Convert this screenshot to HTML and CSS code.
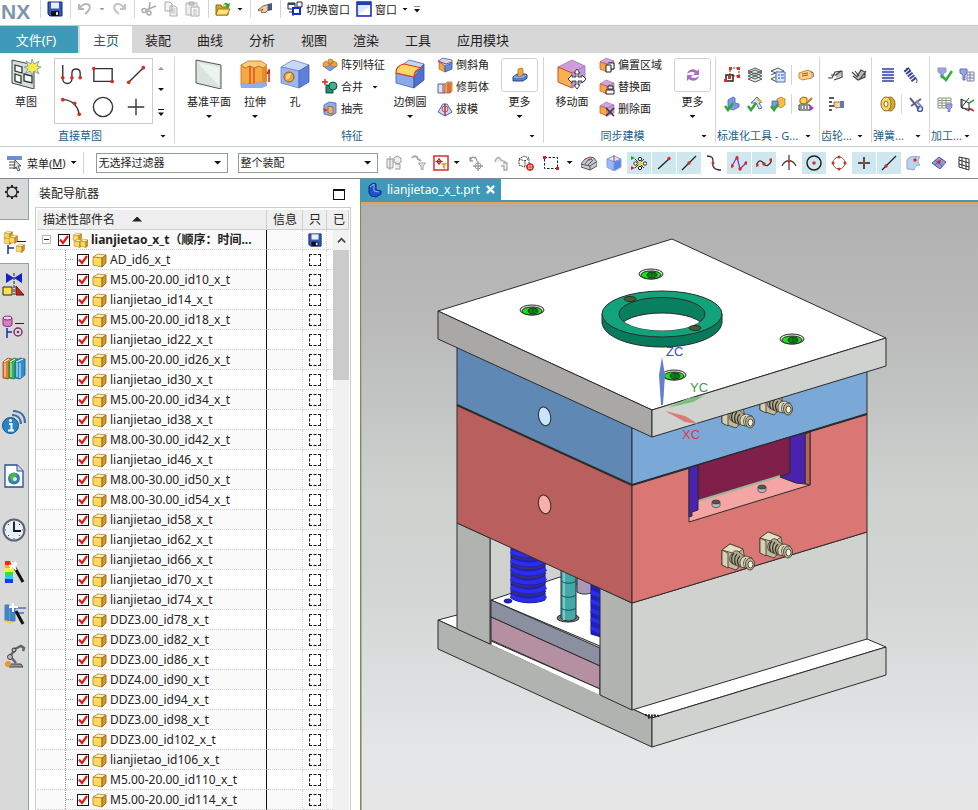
FILE: index.html
```html
<!DOCTYPE html>
<html lang="zh-CN">
<head>
    <meta charset="utf-8">
    <title>NX - lianjietao_x_t.prt</title>
    <link rel="stylesheet" href="styles.css">
</head>
<body>
    <!-- icon sprite -->
    <svg class="sprite" aria-hidden="true">
        <symbol id="i-save" viewBox="0 0 16 16"><path d="M1 1h14v14H3l-2-2z" fill="#3558b8" stroke="#14286e"/><path d="M4 1.500h8v6H4z" fill="#e8eefc"/><path d="M4 10h8v5H4z" fill="#111"/><path d="M9 11h2v3H9z" fill="#dde"/></symbol>
        <symbol id="i-undo" viewBox="0 0 16 16"><path d="M2 3v5h5M2.500 7.500C5 3 10 2 12 4s1 5-4 9" fill="none" stroke="#b4b8be" stroke-width="2"/></symbol>
        <symbol id="i-redo" viewBox="0 0 16 16"><path d="M14 3v5H9M13.500 7.500C11 3 6 2 4 4s-1 5 4 9" fill="none" stroke="#c0c4ca" stroke-width="2"/></symbol>
        <symbol id="i-cut" viewBox="0 0 16 16"><path d="M9 1L8 9M15 5L5 9" stroke="#aaa" stroke-width="1.500"/><circle cx="8" cy="12" r="2" fill="none" stroke="#aaa" stroke-width="1.500"/><circle cx="3" cy="9.500" r="2" fill="none" stroke="#aaa" stroke-width="1.500"/></symbol>
        <symbol id="i-copy" viewBox="0 0 16 16"><path d="M2 1h5l2 2v7H2z M7 5h5l2 2v8H7z" fill="#f4f4f4" stroke="#aaa"/><path d="M8.500 8h4M8.500 10h4M8.500 12h4" stroke="#bbb"/></symbol>
        <symbol id="i-paste" viewBox="0 0 16 16"><path d="M1 2h11v12H1z" fill="#eee" stroke="#b5b5b5"/><path d="M4 1h5v3H4z" fill="#ccc" stroke="#aaa"/><path d="M6 6h8v9H6z" fill="#f6f6f6" stroke="#aaa"/><path d="M8 9h4M8 11h4M8 13h4" stroke="#bbb"/></symbol>
        <symbol id="i-open" viewBox="0 0 16 16"><path d="M1 4h5l1 2h6v8H1z" fill="#d9a520" stroke="#8a6a10"/><path d="M3 8h12l-3 6H1z" fill="#ffe27a" stroke="#9a7a18"/><path d="M8 5c1-4 4-4 5-2l2-1-1 5-4-2 1-1c-1-1-2 0-3 1z" fill="#2fa52f"/></symbol>
        <symbol id="i-hand" viewBox="0 0 16 16"><path d="M11 3l4-1v7l-4 1z" fill="#3a5a9a"/><path d="M11 3.500L6 5 1 9l1 1 4-2-2 3 1 1 2-1 1 1 3-3z" fill="#f3cfa0" stroke="#6a4a20" stroke-width=".8"/></symbol>
        <symbol id="i-switch" viewBox="0 0 16 16"><path d="M1 2h7v6H1zM10 1h5v5h-5zM2 11h4v4" fill="none" stroke="#223"/><path d="M1 2h7v2H1z" fill="#345"/><path d="M6 7h7v6H6z" fill="#fff" stroke="#1230d8" stroke-width="2"/></symbol>
        <symbol id="i-window" viewBox="0 0 16 16"><path d="M1 1h14v14H1z" fill="#dbe7fa" stroke="#1226b8" stroke-width="1.500"/><path d="M1 1h14v3H1z" fill="#1a3fc0"/><path d="M2 14L14 5v9z" fill="#fff"/></symbol>

        <symbol id="b-sketch" viewBox="0 0 30 30"><path d="M1 1l22 5v24L1 24z" fill="#d3e0dc" stroke="#444"/><path d="M4 6l7 2v6l-7-2zM13 15l8 2v7l-8-2zM4 15l6 2v7l-6-2z" fill="#f3faf7" stroke="#333" stroke-width="1.300"/><path d="M21 0l2 5 5-3-2 5 4 1-4 2 2 5-5-3-2 4-2-4-5 3 3-5-4-2 4-1-2-5 5 3z" fill="#ffe84a" stroke="#5a9ab8" stroke-width=".8"/></symbol>
        <symbol id="b-plane" viewBox="0 0 30 30"><path d="M2 1l25 5v24L2 24z" fill="#d9e5df" stroke="#555"/><path d="M4 4l21 4v19z" fill="#edf4f0"/></symbol>
        <symbol id="b-extrude" viewBox="0 0 30 30"><path d="M1 6l4 3 5-2 4 2 5-2 4 2v15c-4-2-7 0-9 2-4-3-9-1-13 1z" fill="#f7a940" stroke="#b5702a" stroke-width=".8"/><path d="M1 6l7-4h13l6 4-4 3-4-2-5 2-4-2-5 2z" fill="#ffcb74" stroke="#b5702a" stroke-width=".8"/><path d="M23 9l4-3v17l-4 3z" fill="#e08a28"/><path d="M10 7v19M14 9v18" stroke="#d0401c" stroke-width="1.200"/><path d="M1 25c4-3 7 0 10 0s8-3 16-1v3l-5 2H1z" fill="#8fadea"/><path d="M29 23V12M27 15l2-4 2 4" stroke="#d02020" stroke-width="1.500" fill="none"/></symbol>
        <symbol id="b-hole" viewBox="0 0 30 30"><path d="M1 8L13 1l16 5-10 6z" fill="#c6d7f8" stroke="#6a82c0" stroke-width=".8"/><path d="M1 8l18 4v17L1 24z" fill="#9bb6f2" stroke="#6a82c0" stroke-width=".8"/><path d="M19 12l10-6v17l-10 6z" fill="#5f7fd8" stroke="#4a62a8" stroke-width=".8"/><circle cx="9" cy="18" r="5" fill="#f3a53e" stroke="#8a5a20"/><path d="M6 20c0-4 3-6 5-6-1 4-2 7-5 6z" fill="#ffd98a"/></symbol>
        <symbol id="b-blend" viewBox="0 0 30 30"><path d="M14 1l15 4-10 10-18-4z" fill="#c7d6f6" stroke="#4a62a8" stroke-width=".8"/><path d="M1 14l18 4v11L1 24z" fill="#8aa8ec" stroke="#4a62a8" stroke-width=".8"/><path d="M19 17L29 5v16l-10 8z" fill="#5070d0" stroke="#33509a" stroke-width=".8"/><path d="M1 14C1 9 4 6 9 5l18 4c-5 1-8 4-8 9z" fill="#ffd868" stroke="#d63a20" stroke-width="1.200"/></symbol>
        <symbol id="b-move" viewBox="0 0 30 30"><path d="M1 8L15 1l13 6-13 7z" fill="#cf9ddc" stroke="#9a7ab0" stroke-width=".8"/><path d="M1 8l14 6v15L1 23z" fill="#f9b050" stroke="#d24a28"/><path d="M15 14l13-7v15l-13 7z" fill="#c09ad6" stroke="#9a7ab0" stroke-width=".8"/><path d="M20 10l3 4h-2v4h4v-2l4 4-4 4v-2h-4v4h2l-3 4-3-4h2v-4h-4v2l-4-4 4-4v2h4v-4h-2z" fill="#fff" stroke="#333" stroke-width=".9"/></symbol>
        <symbol id="b-more1" viewBox="0 0 16 16"><path d="M1 10l4-3h9l1 1v3l-4 3H1z" fill="#4f7fd0" stroke="#2a4a90"/><path d="M2 10h9l3-2" stroke="#b8d0ff" fill="none"/><path d="M6 2l4-1 1 1v6l-4 2-1-1z" fill="#f4a83a" stroke="#a8641a" stroke-width=".7"/></symbol>
        <symbol id="b-more2" viewBox="0 0 16 16"><path d="M2 7c1-5 7-6 10-3l2-2v6H8l2-2C8 4 4 5 2 7zM14 9c-1 5-7 6-10 3l-2 2V8h6l-2 2c2 2 6 1 8-1z" fill="#b06bc8"/></symbol>

        <symbol id="g-profile" viewBox="0 0 24 24"><path d="M3 1v15c0 7 10 7 10 0v-6c0-6 9-6 9 0v5" fill="none" stroke="#333" stroke-width="1.500"/><circle cx="3" cy="15" r="2"/><circle cx="13" cy="15" r="2"/><circle cx="22" cy="15" r="2"/></symbol>
        <symbol id="g-rect" viewBox="0 0 24 24"><path d="M2 5h20v14H2z" fill="none" stroke="#333" stroke-width="1.500"/><circle cx="2" cy="5" r="2"/><circle cx="22" cy="19" r="2"/></symbol>
        <symbol id="g-line" viewBox="0 0 24 24"><path d="M4 20L20 4" stroke="#333" stroke-width="1.500"/><circle cx="4" cy="20" r="2"/><circle cx="20" cy="4" r="2"/></symbol>
        <symbol id="g-arc" viewBox="0 0 24 24"><path d="M3 4c10 0 17 7 18 17" fill="none" stroke="#333" stroke-width="1.500"/><circle cx="3" cy="4" r="2"/><circle cx="16" cy="8" r="2"/><circle cx="21" cy="20" r="2"/></symbol>
        <symbol id="g-circle" viewBox="0 0 24 24"><circle cx="12" cy="12" r="10.500" fill="none" stroke="#333" stroke-width="1.500"/></symbol>
        <symbol id="g-plus" viewBox="0 0 24 24"><path d="M12 3v18M3 12h18" stroke="#333" stroke-width="1.500"/></symbol>

        <symbol id="s-pattern" viewBox="0 0 16 16"><path d="M1 9l7-3 7 3-7 5z" fill="#7a9ce8" stroke="#4a62b0" stroke-width=".7"/><path d="M1 6l3-2 3 2v3l-3 1-3-1zM9 6l3-2 3 2v3l-3 1-3-1zM6 3l2-1 3 1v3l-3 1-2-1z" fill="#f3a33a" stroke="#b5702a" stroke-width=".7"/></symbol>
        <symbol id="s-unite" viewBox="0 0 16 16"><path d="M4 6h7v8H4z" fill="#1f8f68" stroke="#0f4f3a"/><circle cx="11" cy="7" r="4" fill="#3fb088" stroke="#0f4f3a"/><path d="M3 0v6M0 3h6" stroke="#d22" stroke-width="1.500"/></symbol>
        <symbol id="s-shell" viewBox="0 0 16 16"><path d="M2 4l5-3 7 1v10l-5 3-7-2z" fill="#8fadee" stroke="#4a62b0" stroke-width=".8"/><path d="M6 5l5 1v7l-5-1z" fill="#f6b45a" stroke="#a05a14" stroke-width=".8"/><path d="M1 7l5 2-4 2z" fill="#c33b20"/></symbol>
        <symbol id="s-chamfer" viewBox="0 0 16 16"><path d="M2 5l6 2v8l-6-3z" fill="#f4a640" stroke="#b5702a" stroke-width=".8"/><path d="M8 8l7-3v7l-7 3z" fill="#6a88dc" stroke="#33509a" stroke-width=".8"/><path d="M1 4l5-3 9 2v3L8 9z" fill="#c6d7f8" stroke="#4a62a8" stroke-width=".8"/><path d="M1 4l8 3 6-2" stroke="#d63a20" fill="none"/></symbol>
        <symbol id="s-trim" viewBox="0 0 16 16"><path d="M1 5h7v9H1z" fill="#dbe4fa" stroke="#4a62a8"/><path d="M8 5l2-2h5v9l-2 2H8z" fill="#f4b050" stroke="#b5702a" stroke-width=".8"/><path d="M6 5v9M11 4v10M13 4v10" stroke="#c33030" fill="none"/></symbol>
        <symbol id="s-draft" viewBox="0 0 16 16"><path d="M1 11l5-8h4l5 8-7 4z" fill="#cfdaf4" stroke="#4a62a8"/><path d="M8 3v12" stroke="#c33030" stroke-width="1.500"/><circle cx="8" cy="8" r="3" fill="none" stroke="#c05050"/></symbol>
        <symbol id="s-cube" viewBox="0 0 16 16"><path d="M1 5l6-4 8 3-7 3z" fill="#d4a4df" stroke="#9a7ab0" stroke-width=".7"/><path d="M1 5l7 2v8l-7-3z" fill="#f7a648" stroke="#d24a28" stroke-width=".7"/><path d="M8 7l7-3v8l-7 3z" fill="#c09ad6" stroke="#9a7ab0" stroke-width=".7"/></symbol>
        <symbol id="s-offset" viewBox="0 0 16 16"><use href="#s-cube" width="16" height="16"/><path d="M7 8h5v7H7z M9 6h6v6h-3" fill="#fff" stroke="#222"/></symbol>
        <symbol id="s-replace" viewBox="0 0 16 16"><use href="#s-cube" width="16" height="16"/><path d="M7 11h8v4H7zM9 7h5v3H9z" fill="#fff" stroke="#222"/></symbol>
        <symbol id="s-delete" viewBox="0 0 16 16"><use href="#s-cube" width="16" height="16"/><path d="M7 7l8 8M15 7l-8 8" stroke="#333" stroke-width="1.500"/></symbol>

        <symbol id="t-point" viewBox="0 0 16 16"><path d="M6 1h9v8H6z" fill="none" stroke="#822" stroke-dasharray="2 1"/><path d="M2 8h7v6H2z" fill="#fff" stroke="#222" stroke-width="1.500"/><path d="M4 9h3v3H4zM5 0h3v3H5zM13 0h3v3h-3zM13 8h3v3h-3zM0 12h3v3H0z" fill="#e03020"/></symbol>
        <symbol id="t-layers" viewBox="0 0 16 16"><path d="M1 12l7-3 7 3-7 3zM1 9l7-3 7 3-7 3zM1 6l7-3 7 3-7 3zM1 4l7-3 7 3-7 3z" fill="#e8ecec" stroke="#3c4a4a" stroke-width=".9"/></symbol>
        <symbol id="t-laydoc" viewBox="0 0 16 16"><path d="M1 12l6-3v6zM1 8l6-3 6 3M1 4l7-3 6 3-6 3z" fill="#e8ecec" stroke="#4c5a4a"/><path d="M6 5h9v10H6z" fill="#d8e4ff" stroke="#5070b8"/><path d="M8 8h2M8 11h2M11 8h3M11 11h3" stroke="#3a5ac8"/></symbol>
        <symbol id="t-tag" viewBox="0 0 16 16"><path d="M1 6l9-3 4 2v6L4 13l-3-2z" fill="#ffd08a" stroke="#c88a3c"/><path d="M4 7l6-1M4 9l6-1" stroke="#a05a14"/><path d="M13 5c3 0 3 3 2 5" stroke="#555" fill="none"/></symbol>
        <symbol id="t-okblue" viewBox="0 0 16 16"><path d="M4 4l5-3 2 1v5l4 1v3l-6 3-5-2z" fill="#7a9ce8" stroke="#4a62b0" stroke-width=".8"/><path d="M1 10l3 4L9 7" stroke="#2fa535" stroke-width="2.500" fill="none"/></symbol>
        <symbol id="t-okpen" viewBox="0 0 16 16"><path d="M4 7l6-6 5 5-3 1 3 5-3 1-3-6z" fill="#d5def2" stroke="#3a558a" stroke-width=".8"/><path d="M10 3l5 3" stroke="#e8b32a" stroke-width="2"/><path d="M1 10l3 4L9 7" stroke="#2fa535" stroke-width="2.500" fill="none"/></symbol>
        <symbol id="t-okbox" viewBox="0 0 16 16"><path d="M7 3l4-2 4 2v6l-4 3-4-2z" fill="#f9bd45" stroke="#b5802a" stroke-width=".8"/><path d="M2 5h6v6H2z" fill="#7a9ce8" stroke="#4a62b0" stroke-width=".8"/><path d="M1 10l3 4L8 8" stroke="#2fa535" stroke-width="2.500" fill="none"/></symbol>
        <symbol id="t-boxpen" viewBox="0 0 16 16"><path d="M2 3l3-2 4 1v5l-3 1-4-1z" fill="#ffd04a" stroke="#96620e"/><path d="M1 9h11v5H1z" fill="#fff" stroke="#222"/><path d="M3 10v3M6 10v3M9 10v3" stroke="#222"/><path d="M8 8l6-6" stroke="#c07a20" stroke-width="2"/><path d="M12 9l4 3-4 3z" fill="#a838c8"/></symbol>
        <symbol id="t-gear1" viewBox="0 0 16 16"><path d="M8 6l5-2v5l-5 2z" fill="#bbb"/><path d="M0 11h4l3-6 7-1M3 8h5l5-4M6 13l8-3V4" fill="none" stroke="#444" stroke-width="1.200"/></symbol>
        <symbol id="t-gear2" viewBox="0 0 16 16"><path d="M5 8l4-5 5 2v5l-7 3z" fill="#bbb"/><path d="M1 5l5 5 4-7 4 2v5l-7 3-5-4M4 4l4 5M9 12l6-8" fill="none" stroke="#444" stroke-width="1.200"/></symbol>
        <symbol id="t-gearlist" viewBox="0 0 16 16"><path d="M1 2h5M1 6h3M1 10h5M1 14h3" stroke="#222" stroke-width="1.500"/><path d="M6 6h6l3-1v6l-7 1-2-2z" fill="#f5d3a4" stroke="#8a6030" stroke-width=".8"/><path d="M12 5h4v7h-4z" fill="#6478b0"/></symbol>
        <symbol id="t-spring" viewBox="0 0 16 16"><path d="M3 1h10v14H3z" fill="#dfe4ff"/><path d="M2 2h12M2 5h12M2 8h12M2 11h12M2 14h12" stroke="#3944a8" stroke-width="1.600"/></symbol>
        <symbol id="t-spring2" viewBox="0 0 16 16"><path d="M3 2l9 12" stroke="#3944a8" stroke-width="6" stroke-dasharray="2 1"/><path d="M3 2C6 0 8 3 6 5M11 11c3 0 4 3 2 5" stroke="#334" fill="none"/></symbol>
        <symbol id="t-disc" viewBox="0 0 16 16"><ellipse cx="10" cy="8" rx="5" ry="7" fill="#d8aa2e" stroke="#8a6a18"/><ellipse cx="6" cy="8" rx="5" ry="7" fill="#f8dc6a" stroke="#8a6a18"/><ellipse cx="6" cy="8" rx="2" ry="3" fill="#fff" stroke="#8a6a18"/></symbol>
        <symbol id="t-cutspring" viewBox="0 0 16 16"><path d="M2 2l9 11M13 3L3 10" stroke="#667" stroke-width="2"/><circle cx="12" cy="13" r="2.500" fill="none" stroke="#4858b0" stroke-width="1.500"/><path d="M8 5l6 6" stroke="#7f8cd0" stroke-width="2"/></symbol>
        <symbol id="t-toolok" viewBox="0 0 16 16"><path d="M1 1h8v4l-3 2v4H4V7L1 5z" fill="#9aa4e0" stroke="#8a94d0"/><path d="M4 8l5 5 6-9" stroke="#2fb03a" stroke-width="2.500" fill="none"/></symbol>
        <symbol id="t-tooldoc" viewBox="0 0 16 16"><path d="M1 2h7v4L6 8v5H4V8L1 6z" fill="#9aa4e0" stroke="#6470b8"/><path d="M8 5h7v9H8zM8 8h7M8 11h7M11 5v9" fill="#eef" stroke="#7a86a0"/></symbol>
        <symbol id="t-sheet" viewBox="0 0 16 16"><path d="M1 2h13v10H1zM1 4.500h13M1 7h13M1 9.500h13M5 2v10M9 2v10" fill="#fbfbea" stroke="#909a88"/><path d="M9 8h6v3l-2 2v3h-2v-3l-2-2z" fill="#98a2dc" stroke="#6470b8" stroke-width=".7"/></symbol>
        <symbol id="t-axis" viewBox="0 0 16 16"><path d="M2 3l8 4v8l-8-4zM2 12L10 2M3 3v9l11 2" fill="#eee" stroke="#333"/><path d="M10 7l5-3" stroke="#2fa535" stroke-width="1.500"/><path d="M10 12l5 3" stroke="#c33" stroke-width="1.500"/></symbol>

        <symbol id="c-menu" viewBox="0 0 16 16"><path d="M0 1h15v4H0z" fill="#6a90d4"/><path d="M2 7h8M2 10h8M2 13h8" stroke="#889" stroke-width="1.500"/><path d="M8 5l6 6h-3l2 4-2 1-2-4-2 2z" fill="#ddd" stroke="#333" stroke-width=".8"/></symbol>
        <symbol id="c-asm" viewBox="0 0 16 16"><path d="M1 4h6v9H1zM4 1v14M8 3l3-2 4 2v4l-3 2-4-2zM9 9h5v5H9" fill="#eee" stroke="#999"/></symbol>
        <symbol id="c-filter0" viewBox="0 0 16 16"><path d="M1 3c2-3 5-2 6 1l3 2" stroke="#aaa" stroke-width="2" fill="none"/><path d="M7 8h8l-3 3v4l-2-1v-3z" fill="#ddd" stroke="#aaa"/></symbol>
        <symbol id="c-filter" viewBox="0 0 16 16"><path d="M1 1h14v14H1z" fill="#fff" stroke="#d32f2f" stroke-width="1.500"/><path d="M6 3v7M2.500 6.500h7" stroke="#922"/><circle cx="6" cy="6.500" r="2" fill="none" stroke="#922"/><path d="M8 8h6l-2 3v3l-2-1v-2z" fill="#f3a623"/></symbol>
        <symbol id="c-snap1" viewBox="0 0 16 16"><path d="M2 6c1-5 6-5 7 0M2 6V2M2 6h3M10 6v10M5 11h10" stroke="#999" fill="none" stroke-width="1.300"/><circle cx="10" cy="11" r="3" fill="none" stroke="#999"/></symbol>
        <symbol id="c-snap2" viewBox="0 0 16 16"><path d="M2 7c1-5 5-6 6-2l5 2M10 8h4v7h-3v-4h-3" stroke="#aaa" fill="#eee" stroke-width="1.300"/></symbol>
        <symbol id="c-dotcube" viewBox="0 0 16 16"><path d="M1 4l5-3 5 2v7l-4 2-6-2zM1 4l6 2v6M7 6l4-3" fill="none" stroke="#222" stroke-dasharray="1.500 1"/><circle cx="12" cy="12" r="3" fill="#fff" stroke="#d22" stroke-width="1.500"/><path d="M12 8v8M8 12h8" stroke="#d22"/></symbol>
        <symbol id="c-marquee" viewBox="0 0 16 16"><path d="M1.500 2.500h13v11h-13z" fill="none" stroke="#222" stroke-dasharray="2.500 1.500"/><path d="M0 1h3v3H0zM13 12h3v3h-3z" fill="#e02020"/></symbol>
        <symbol id="c-shade" viewBox="0 0 16 16"><path d="M0 9l4-5 5-2 4 1 3 4v4l-7 4-9-3z" fill="#c4cad4" stroke="#555"/><path d="M0 9l9 2v4M9 11l6-4M4 9l4-5M7 10l5-5" stroke="#555" fill="none"/><path d="M7 5l4-1" stroke="#d33" stroke-width="1.500"/></symbol>
        <symbol id="c-bluecube" viewBox="0 0 16 16"><path d="M1 4l7-3 7 3-7 3z" fill="#d6e4fc" stroke="#7f9fe0"/><path d="M1 4l7 3v9l-7-4z" fill="#9abcf6" stroke="#7f9fe0"/><path d="M8 7l7-3v8l-7 4z" fill="#5f86e0" stroke="#7f9fe0"/><path d="M8 0v7" stroke="#d33"/></symbol>
        <symbol id="c-toggle" viewBox="0 0 16 16"><path d="M0 1l4 2-4 2z" fill="#1aa51a"/><path d="M0 11l4 2-4 2z" fill="#d22"/><path d="M4 4l9 9M4 13l9-9" stroke="#333"/><circle cx="9" cy="8.500" r="2" fill="#ffd400"/><circle cx="9" cy="4" r="1.700" fill="#fff" stroke="#222"/><circle cx="9" cy="13" r="1.700" fill="#fff" stroke="#222"/><circle cx="4.500" cy="8.500" r="1.700" fill="#fff" stroke="#222"/><circle cx="14" cy="8.500" r="1.700" fill="#fff" stroke="#222"/></symbol>
        <symbol id="c-end" viewBox="0 0 16 16"><path d="M2 14L14 3" stroke="#222" stroke-width="1.300"/><circle cx="13" cy="3.500" r="1.700"/></symbol>
        <symbol id="c-mid" viewBox="0 0 16 16"><path d="M1 15L15 1" stroke="#222" stroke-width="1.300"/><circle cx="8" cy="8" r="1.700"/></symbol>
        <symbol id="c-ctrl" viewBox="0 0 16 16"><path d="M1 1c9 0 5 7 6 10s4 4 8 4" fill="none" stroke="#333" stroke-width="1.300"/><circle cx="7" cy="8" r="1.500"/></symbol>
        <symbol id="c-pole" viewBox="0 0 16 16"><path d="M1 11L6 2l3 12 6-6" fill="none" stroke="#8a3ab0" stroke-width="1.300"/><circle cx="1" cy="11" r="1.700"/><circle cx="6" cy="3" r="1.700"/><circle cx="9" cy="14" r="1.700"/><circle cx="15" cy="8" r="1.700"/></symbol>
        <symbol id="c-spline" viewBox="0 0 16 16"><path d="M0 11C3 3 6 6 8 9s5 2 8-4" fill="none" stroke="#333" stroke-width="1.300"/><circle cx="1" cy="10" r="1.700"/><circle cx="8" cy="9" r="1.700"/><circle cx="15" cy="5" r="1.700"/></symbol>
        <symbol id="c-inter" viewBox="0 0 16 16"><path d="M8 0v15M1 11c3-7 11-7 14 0" fill="none" stroke="#444" stroke-width="1.300"/><circle cx="8" cy="6" r="1.500"/></symbol>
        <symbol id="c-center" viewBox="0 0 16 16"><circle class="ring" cx="8" cy="8" r="7"/><circle cx="8" cy="8" r="1.700"/></symbol>
        <symbol id="c-quad" viewBox="0 0 16 16"><circle class="ring thin" cx="8" cy="8" r="6"/><circle cx="8" cy="2" r="1.500"/><circle cx="8" cy="14" r="1.500"/><circle cx="2" cy="8" r="1.500"/><circle cx="14" cy="8" r="1.500"/></symbol>
        <symbol id="c-exist" viewBox="0 0 16 16"><path d="M8 2v12M2 8h12" stroke="#222" stroke-width="1.500"/><circle cx="8" cy="8" r="1.500"/></symbol>
        <symbol id="c-oncurve" viewBox="0 0 16 16"><path d="M1 15L15 1" stroke="#222" stroke-width="1.300"/><circle cx="5" cy="11" r="1.700"/></symbol>
        <symbol id="c-face" viewBox="0 0 16 16"><path d="M1 5c2-4 8-4 13-3-3 4-2 6 0 8-3 0-5 1-6 5-4-1-7-1-7-1z" fill="#bcd2f2" stroke="#8aa4d0"/><circle cx="9" cy="5" r="1.700"/></symbol>
        <symbol id="c-facet" viewBox="0 0 16 16"><path d="M1 8l7-6 7 5-6 7z" fill="#8c9cd8" stroke="#4c5c9c"/><path d="M4 5l7 6M11 4l-7 6" stroke="#4c5c9c"/><circle cx="8" cy="7" r="1.700"/></symbol>
        <symbol id="c-grid" viewBox="0 0 16 16"><path d="M3 2l10 2v11L3 12zM3 5l10 3M3 9l10 3M6 3v10M10 3v11" fill="#fff" stroke="#333"/></symbol>

        <symbol id="r-gear" viewBox="0 0 16 16"><circle cx="8" cy="8" r="5" fill="none" stroke="#222" stroke-width="1.300"/><path d="M8 1v2M8 13v2M1 8h2M13 8h2M3 3l1.500 1.500M11.500 11.500L13 13M13 3l-1.500 1.500M4.500 11.500L3 13" stroke="#222" stroke-width="2"/></symbol>
        <symbol id="y-cube" viewBox="0 0 16 16"><path d="M2 5l5-3 8 1-4 3z" fill="#fff3b8" stroke="#b08018" stroke-width=".8"/><path d="M2 5l9 1v9l-9-2z" fill="#ffd960" stroke="#b08018" stroke-width=".8"/><path d="M11 6l4-3v8l-4 4z" fill="#d8982a" stroke="#8a5f0c" stroke-width=".8"/></symbol>
        <symbol id="y-asm" viewBox="0 0 16 16"><use href="#y-cube" width="10" height="10"/><use href="#y-cube" x="1" y="6" width="10" height="10"/><use href="#y-cube" x="7" y="6" width="10" height="10"/></symbol>
        <symbol id="r-nav" viewBox="0 0 24 24"><use href="#y-cube" x="0" y="0" width="10" height="10"/><use href="#y-cube" x="0" y="5" width="10" height="10"/><use href="#y-cube" x="5" y="4" width="10" height="10"/><path d="M14 11.500h9" stroke="#222"/><path d="M5 15v9M5 18h6" stroke="#1a2fa8" fill="none" stroke-width="1.500"/><use href="#y-cube" x="12" y="13" width="10" height="10"/></symbol>
        <symbol id="r-cons" viewBox="0 0 24 24"><path d="M4 1l8 5-8 5zM20 1l-8 5 8 5z" fill="#1521c8"/><path d="M12 1v22" stroke="#222" stroke-dasharray="3 1"/><path d="M1 15h9v8H1z" fill="#ffe14a" stroke="#222"/><path d="M14 14l8 9h-8z" fill="#c02818" stroke="#611"/></symbol>
        <symbol id="r-part" viewBox="0 0 24 24"><path d="M1 4v7c2 2 8 2 9 0V4z" fill="#d67fc0" stroke="#803070"/><ellipse cx="5.500" cy="4" rx="4.500" ry="2" fill="#f6c8ea" stroke="#803070"/><path d="M13 9.500h9" stroke="#222"/><path d="M5 14v10M5 18h5" stroke="#1a2fa8" stroke-width="1.500"/><circle cx="16" cy="18" r="4" fill="none" stroke="#803070" stroke-width="1.500"/><circle cx="16" cy="18" r="1.300" fill="#803070"/></symbol>
        <symbol id="r-books" viewBox="0 0 24 24"><path d="M1 6l5-4 4 1v16l-4 4-5-1z" fill="#ea7a26" stroke="#83400c" stroke-width=".7"/><path d="M7 6l5-4 4 1v16l-4 4-5-1z" fill="#35b44a" stroke="#13662a" stroke-width=".7"/><path d="M13 6l5-4 5 1v16l-5 4-5-1z" fill="#2f8fcc" stroke="#0f4f80" stroke-width=".7"/><path d="M3 7v14M9 7v14M18 7v15M15 7v14" stroke="#d8f0ff"/><path d="M2 6l5-3M8 6l5-3M14 6l7-3" stroke="#fff"/></symbol>
        <symbol id="r-info" viewBox="0 0 24 24"><path d="M10 5c6 0 9 4 9 9M11 1c8 0 12 5 12 12" stroke="#3b6ea8" stroke-width="2.200" fill="none"/><circle cx="8.500" cy="15.500" r="8" fill="#2585c8" stroke="#11528a"/><path d="M7 14h2.500v6M6 20.500h6" stroke="#fff" stroke-width="2" fill="none"/><circle cx="8.500" cy="10.500" r="1.500" fill="#fff"/></symbol>
        <symbol id="r-web" viewBox="0 0 24 24"><path d="M3 1h12l6 6v16H3z" fill="#fff" stroke="#2a4f8a" stroke-width="1.300"/><path d="M15 1v6h6" fill="#cfe0f4" stroke="#2a4f8a"/><circle cx="12" cy="14.500" r="6" fill="#3878c0"/><path d="M8 11c3-3 6-2 7 0l-3 3 1 4c-4 0-6-4-5-7z" fill="#4fb84a"/><circle cx="13" cy="15" r="2" fill="#d8f0ea"/></symbol>
        <symbol id="r-clock" viewBox="0 0 24 24"><circle cx="12" cy="12" r="10.500" fill="#e8f0fa" stroke="#5c6470" stroke-width="2"/><path d="M12 4v9h7" stroke="#111" stroke-width="1.800" fill="none"/><path d="M12 3v1M12 20v1M3 12h1M20 12h1M6 6l1 1M17 17l1 1M6 18l1-1M17 7l1-1" stroke="#444"/></symbol>
        <symbol id="r-color" viewBox="0 0 24 24"><path d="M3 1h8v4H3z" fill="#f21"/><path d="M3 5h8v3H3z" fill="#fa2"/><path d="M3 8h8v4H3z" fill="#fe2"/><path d="M3 12h8v4H3z" fill="#3d4"/><path d="M3 16h8v3H3z" fill="#2cf"/><path d="M3 19h8v4H3z" fill="#23e"/><path d="M13 8l8 14" stroke="#111" stroke-width="3"/><path d="M9 1l5 9M7 6l8-2M8 9l6-7" stroke="#fff" stroke-width="2"/></symbol>
        <symbol id="r-wand" viewBox="0 0 24 24"><path d="M3 3h4v16H3zM8 6h5v13H8z" fill="#3a84cc" stroke="#4c7fbc"/><path d="M12 6h12M13 11h9" stroke="#4a72c8" stroke-width="1.500"/><path d="M2 18l5 5 4-3" fill="#ffd43a"/><path d="M14 9l7 13" stroke="#111" stroke-width="3"/><path d="M11 1v9M7 5h9" stroke="#fff" stroke-width="2"/></symbol>
        <symbol id="r-robot" viewBox="0 0 24 24"><path d="M11 6l8-4 3 2-1 3M13 6l-5 6 6 7" stroke="#666" stroke-width="2.500" fill="none"/><circle cx="12" cy="6" r="2" fill="#999" stroke="#333"/><circle cx="8" cy="13" r="2.500" fill="#bbb" stroke="#444"/><path d="M9 20h10l2 3H7z" fill="#999" stroke="#444"/><circle cx="6" cy="20" r="3" fill="#ee9430"/></symbol>
        <symbol id="i-part" viewBox="0 0 16 16"><path d="M2 4l4-3 3 1v6l5 1v3l-5 3-5-1-2-3z" fill="#1f50d0" stroke="#0c2a80"/><path d="M3 5l4-3v7l5 1" stroke="#8fb4ff" fill="none"/></symbol>
    </svg>

    <header class="quickbar">
        <span class="logo">NX</span>
        <span class="sep"></span>
        <button class="qb" aria-label="保存"><svg><use href="#i-save"/></svg></button>
        <span class="sep"></span>
        <button class="qb" aria-label="撤消"><svg><use href="#i-undo"/></svg></button>
        <span class="caret faded"></span>
        <button class="qb" aria-label="重做"><svg><use href="#i-redo"/></svg></button>
        <span class="sep"></span>
        <button class="qb" aria-label="剪切"><svg><use href="#i-cut"/></svg></button>
        <button class="qb" aria-label="复制"><svg><use href="#i-copy"/></svg></button>
        <button class="qb" aria-label="粘贴"><svg><use href="#i-paste"/></svg></button>
        <span class="sep"></span>
        <button class="qb" aria-label="打开"><svg><use href="#i-open"/></svg></button>
        <span class="caret"></span>
        <span class="sep"></span>
        <button class="qb" aria-label="触控模式"><svg><use href="#i-hand"/></svg></button>
        <span class="sep"></span>
        <button class="qb text"><svg><use href="#i-switch"/></svg>切换窗口</button>
        <button class="qb text"><svg><use href="#i-window"/></svg>窗口</button>
        <span class="caret"></span>
        <span class="caret bar"></span>
    </header>

    <nav class="tabs">
        <button class="file">文件(F)</button>
        <button class="active">主页</button>
        <button>装配</button>
        <button>曲线</button>
        <button>分析</button>
        <button>视图</button>
        <button>渲染</button>
        <button>工具</button>
        <button>应用模块</button>
    </nav>

    <section class="ribbon">
        <div class="group g-sketch">
            <div class="group-body">
                <button class="big"><svg><use href="#b-sketch"/></svg>草图</button>
                <div class="gallery">
                    <button aria-label="轮廓"><svg><use href="#g-profile"/></svg></button>
                    <button aria-label="矩形"><svg><use href="#g-rect"/></svg></button>
                    <button aria-label="直线"><svg><use href="#g-line"/></svg></button>
                    <button aria-label="圆弧"><svg><use href="#g-arc"/></svg></button>
                    <button aria-label="圆"><svg><use href="#g-circle"/></svg></button>
                    <button aria-label="点"><svg><use href="#g-plus"/></svg></button>
                </div>
                <div class="gallery-nav">
                    <span class="caret up faded"></span>
                    <span class="caret"></span>
                    <span class="caret bar"></span>
                </div>
            </div>
            <div class="group-foot"><span>直接草图</span><i class="caret"></i></div>
        </div>

        <div class="group g-feature">
            <div class="group-body">
                <button class="big w48"><svg><use href="#b-plane"/></svg>基准平面<i class="caret"></i></button>
                <button class="big w44"><svg><use href="#b-extrude"/></svg>拉伸<i class="caret"></i></button>
                <button class="big w36"><svg><use href="#b-hole"/></svg>孔</button>
                <div class="col">
                    <button><svg><use href="#s-pattern"/></svg>阵列特征</button>
                    <button><svg><use href="#s-unite"/></svg>合并<i class="caret"></i></button>
                    <button><svg><use href="#s-shell"/></svg>抽壳</button>
                </div>
                <button class="big w36"><svg><use href="#b-blend"/></svg>边倒圆<i class="caret"></i></button>
                <div class="col">
                    <button><svg><use href="#s-chamfer"/></svg>倒斜角</button>
                    <button><svg><use href="#s-trim"/></svg>修剪体</button>
                    <button><svg><use href="#s-draft"/></svg>拔模</button>
                </div>
                <button class="big more"><span><svg><use href="#b-more1"/></svg></span>更多<i class="caret"></i></button>
            </div>
            <div class="group-foot"><span>特征</span><i class="caret"></i></div>
        </div>

        <div class="group g-sync">
            <div class="group-body">
                <button class="big w36"><svg><use href="#b-move"/></svg>移动面</button>
                <div class="col">
                    <button><svg><use href="#s-offset"/></svg>偏置区域</button>
                    <button><svg><use href="#s-replace"/></svg>替换面</button>
                    <button><svg><use href="#s-delete"/></svg>删除面</button>
                </div>
                <button class="big more"><span><svg><use href="#b-more2"/></svg></span>更多<i class="caret"></i></button>
            </div>
            <div class="group-foot"><span>同步建模</span><i class="caret"></i></div>
        </div>

        <div class="group narrow g-std">
            <div class="minis">
                <div class="mini-row">
                    <button aria-label="点集"><svg><use href="#t-point"/></svg></button>
                    <button aria-label="图层"><svg><use href="#t-layers"/></svg></button>
                    <button aria-label="图层类别"><svg><use href="#t-laydoc"/></svg></button>
                    <span class="sep"></span>
                    <button aria-label="属性"><svg><use href="#t-tag"/></svg></button>
                </div>
                <div class="mini-row">
                    <button aria-label="检查模型"><svg><use href="#t-okblue"/></svg></button>
                    <button aria-label="检查制图"><svg><use href="#t-okpen"/></svg></button>
                    <button aria-label="检查装配"><svg><use href="#t-okbox"/></svg></button>
                    <span class="sep"></span>
                    <button aria-label="编辑"><svg><use href="#t-boxpen"/></svg></button>
                </div>
            </div>
            <div class="group-foot"><span>标准化工具 - G...</span><i class="caret"></i></div>
        </div>

        <div class="group narrow g-gear">
            <div class="minis">
                <div class="mini-row">
                    <button aria-label="柱齿轮"><svg><use href="#t-gear1"/></svg></button>
                    <button aria-label="锥齿轮"><svg><use href="#t-gear2"/></svg></button>
                </div>
                <div class="mini-row">
                    <button aria-label="齿轮列表"><svg><use href="#t-gearlist"/></svg></button>
                </div>
            </div>
            <div class="group-foot"><span>齿轮...</span><i class="caret"></i></div>
        </div>

        <div class="group narrow g-spring">
            <div class="minis">
                <div class="mini-row">
                    <button aria-label="压缩弹簧"><svg><use href="#t-spring"/></svg></button>
                    <button aria-label="拉伸弹簧"><svg><use href="#t-spring2"/></svg></button>
                </div>
                <div class="mini-row">
                    <button aria-label="碟簧"><svg><use href="#t-disc"/></svg></button>
                    <span class="sep"></span>
                    <button aria-label="删除弹簧"><svg><use href="#t-cutspring"/></svg></button>
                </div>
            </div>
            <div class="group-foot"><span>弹簧...</span><i class="caret"></i></div>
        </div>

        <div class="group narrow g-cam">
            <div class="minis">
                <div class="mini-row">
                    <button aria-label="加工检查"><svg><use href="#t-toolok"/></svg></button>
                    <button aria-label="加工文档"><svg><use href="#t-tooldoc"/></svg></button>
                </div>
                <div class="mini-row">
                    <button aria-label="加工表"><svg><use href="#t-sheet"/></svg></button>
                    <button aria-label="加工坐标"><svg><use href="#t-axis"/></svg></button>
                </div>
            </div>
            <div class="group-foot"><span>加工...</span><i class="caret"></i></div>
        </div>
    </section>

    <div class="selbar">
        <button class="menu"><svg><use href="#c-menu"/></svg>菜单(<u>M</u>)<i class="caret"></i></button>
        <span class="sep"></span>
        <label class="combo filter"><select aria-label="类型过滤器"><option>无选择过滤器</option></select></label>
        <label class="combo scope"><select aria-label="选择范围"><option>整个装配</option></select></label>
        <div class="tools">
            <button aria-label="装配选择"><svg><use href="#c-asm"/></svg></button>
            <button aria-label="重置过滤器"><svg><use href="#c-filter0"/></svg></button>
            <button class="slim" aria-label="常规选择过滤器"><svg><use href="#c-filter"/></svg></button>
            <span class="caret"></span>
            <button aria-label="捕捉"><svg><use href="#c-snap1"/></svg></button>
            <button aria-label="上次选择"><svg><use href="#c-snap2"/></svg></button>
            <button aria-label="隐藏边"><svg><use href="#c-dotcube"/></svg></button>
            <button aria-label="矩形选择"><svg><use href="#c-marquee"/></svg></button>
            <span class="caret"></span>
            <button aria-label="高亮面"><svg><use href="#c-shade"/></svg></button>
            <button aria-label="着色"><svg><use href="#c-bluecube"/></svg></button>
            <button class="on" aria-label="启用捕捉点"><svg><use href="#c-toggle"/></svg></button>
            <button class="on" aria-label="端点"><svg><use href="#c-end"/></svg></button>
            <button class="on" aria-label="中点"><svg><use href="#c-mid"/></svg></button>
            <button aria-label="控制点"><svg><use href="#c-ctrl"/></svg></button>
            <button class="on" aria-label="极点"><svg><use href="#c-pole"/></svg></button>
            <button class="on" aria-label="定义点"><svg><use href="#c-spline"/></svg></button>
            <button aria-label="交点"><svg><use href="#c-inter"/></svg></button>
            <button class="on" aria-label="圆弧中心"><svg><use href="#c-center"/></svg></button>
            <button aria-label="象限点"><svg><use href="#c-quad"/></svg></button>
            <button class="on" aria-label="现有点"><svg><use href="#c-exist"/></svg></button>
            <button class="on" aria-label="曲线上的点"><svg><use href="#c-oncurve"/></svg></button>
            <button aria-label="面上的点"><svg><use href="#c-face"/></svg></button>
            <button aria-label="小平面顶点"><svg><use href="#c-facet"/></svg></button>
            <button aria-label="栅格点"><svg><use href="#c-grid"/></svg></button>
        </div>
    </div>

    <main>
        <aside class="rail">
            <button class="rail-gear" aria-label="资源条选项"><svg><use href="#r-gear"/></svg></button>
            <button class="rail-active" aria-label="装配导航器"><svg><use href="#r-nav"/></svg></button>
            <div class="rail-list">
                <button aria-label="约束导航器"><svg><use href="#r-cons"/></svg></button>
                <button aria-label="部件导航器"><svg><use href="#r-part"/></svg></button>
                <button aria-label="重用库"><svg><use href="#r-books"/></svg></button>
                <button class="wide" aria-label="HD3D 工具"><svg><use href="#r-info"/></svg></button>
                <button class="wide" aria-label="Web 浏览器"><svg><use href="#r-web"/></svg></button>
                <button class="wide" aria-label="历史记录"><svg><use href="#r-clock"/></svg></button>
                <button aria-label="系统材料"><svg><use href="#r-color"/></svg></button>
                <button aria-label="加工向导"><svg><use href="#r-wand"/></svg></button>
                <button aria-label="机器人"><svg><use href="#r-robot"/></svg></button>
            </div>
        </aside>

        <section class="navigator">
            <div class="nav-title"><span>装配导航器</span><button class="max" aria-label="最大化"></button></div>
            <div class="nav-box">
                <table>
                    <thead>
                        <tr>
                            <th class="c-name">描述性部件名 <span class="sort"></span></th>
                            <th class="c-info">信息</th>
                            <th class="c-ro">只</th>
                            <th class="c-mod">已</th>
                        </tr>
                    </thead>
                    <tbody id="tree"></tbody>
                </table>
                <div class="scroll">
                    <button aria-label="向上滚动"><svg viewBox="0 0 10 10"><path d="M1 7l4-4 4 4" fill="none" stroke="#444" stroke-width="2"/></svg></button>
                    <div class="thumb"></div>
                </div>
            </div>
        </section>

        <section class="view">
            <div class="doc-tabs">
                <div class="doc-tab"><svg><use href="#i-part"/></svg>lianjietao_x_t.prt<button aria-label="关闭"><svg viewBox="0 0 10 10"><path d="M1 1l8 8M9 1l-8 8" stroke="#fff" stroke-width="2.500"/></svg></button></div>
            </div>
            <div class="canvas">
                <svg class="model" viewBox="362 203 616 607" preserveAspectRatio="xMinYMin meet">
                    <defs>
                        <g id="hole">
                            <ellipse rx="12" ry="5" fill="#e8e8e8"/>
                            <ellipse cy="1" rx="10" ry="4" fill="#12e812"/>
                            <ellipse cx="1" cy="1" rx="5" ry="3" fill="#078a10"/>
                            <path d="M-3-1v3M1-2v5M4-1v3" stroke-width=".7"/>
                        </g>
                        <!-- water nipple -->
                        <g id="nipple" stroke="#33322a" stroke-width=".8" stroke-linejoin="round">
                            <path d="M-16-8l8-6 13 5 2 11-9 10-14-5z" fill="#c2ba9e"/>
                            <path d="M-16-8l8-6 13 5-7 5z" fill="#e6dfc4"/>
                            <path d="M-16-8l6 3v15l-6-3z" fill="#d8d0b4"/>
                            <path d="M-7-3c3-5 6-5 8-3l6 5-5 10-7-3c-4-2-4-6-2-9z" fill="#b5ad90"/>
                            <path d="M-4-5c-3 3-3 8-1 11M-1-4c-3 3-3 8-1 11M2-2c-3 3-3 7-1 10" fill="none" stroke-width="1.300"/>
                            <path d="M5-1c4-2 5 0 9 1l-2 11-9-2c-2-4-1-8 2-10z" fill="#ddd6ba"/>
                            <path d="M8 0c-3 3-3 7-1 10" fill="none"/>
                            <ellipse cx="12" cy="6" rx="4.500" ry="6" fill="#b9b195"/>
                            <ellipse cx="12.500" cy="6.500" rx="2.500" ry="3.500" fill="#f4eeda"/>
                        </g>
                        <g id="screw" stroke="#333" stroke-width=".7">
                            <path d="M-4 0v4c2 2 6 2 8 0V0z" fill="#b4beb6"/>
                            <ellipse rx="4" ry="2" fill="#555"/>
                        </g>
                        <clipPath id="bore"><ellipse cx="662" cy="314" rx="43" ry="16.500"/></clipPath>
                        <clipPath id="window"><path d="M490 538l110 50v107l-110-51z"/></clipPath>
                    </defs>

                    <g class="edge">
                        <!-- base plate -->
                        <path class="white" d="M438 620l19-5 410 24 19 8-234 71z"/>
                        <path class="dark" d="M438 620l214 98v29l-214-98z"/>
                        <path class="lite" d="M652 718l234-71v28l-234 72z"/>

                        <!-- ejector box seen between the spacer blocks -->
                        <g clip-path="url(#window)">
                            <path class="lite" d="M490 530h112v170H490z"/>
                            <path class="white" d="M491 600l69-23 47 20v52z"/>
                            <path d="M577 570h18v20c-4 5-14 5-18 2z" fill="#a899b8"/>
                            <g stroke="#16168a" stroke-width="1">
                                <path d="M511 540h34v60c-8 4-26 4-34-2z" fill="#2020b8"/>
                                <path d="M511 551c10 6 26 6 35 0M511 560c10 6 26 6 35 0M511 569c10 6 26 6 35 0M511 578c10 6 26 6 35 0M511 587c10 6 26 6 35 0M511 596c10 6 26 6 35 0" fill="none" stroke="#2c2cec" stroke-width="4"/>
                                <path d="M511 555c10 6 26 6 35 0M511 564c10 6 26 6 35 0M511 573c10 6 26 6 35 0M511 582c10 6 26 6 35 0M511 591c10 6 26 6 35 0" fill="none" stroke="#3a3560" stroke-width="1.500"/>
                                <ellipse cx="508" cy="601" rx="4" ry="2" fill="#2222d8"/>
                                <path d="M591 580h10v57l-10-3z" fill="#2020b8"/>
                                <path d="M591 592l10 4M591 601l10 4M591 610l10 4M591 619l10 4M591 628l10 4" stroke="#2c2cec" stroke-width="4"/>
                            </g>
                            <ellipse cx="568" cy="618" rx="11" ry="4" fill="#777"/>
                            <path d="M561 565h15v53c-3 4-12 4-15 0z" fill="#45a8a8"/>
                            <path d="M564 566v54" stroke="#7acaca" stroke-width="2"/>
                            <path d="M561 581c4 3 11 3 15 0M561 595c4 3 11 3 15 0M561 608c4 3 11 3 15 0" fill="none" stroke="#0e5050"/>
                            <path d="M491 600l109 48v18l-109-49z" fill="#8a90a0"/>
                            <path d="M491 617l109 49v23l-109-49z" fill="#b490a2"/>
                            <path class="white" d="M491 641l109 48v7l-109-50z"/>
                        </g>
                        <path class="dark" d="M457 523l33 15v106l-33-15z"/>
                        <path class="dark" d="M600 588l32 15v107l-32-15z"/>
                        <path class="lite" d="M632 603l235-71v107l-235 71z"/>
                        <path d="M645 715l15 1M648 718l8-3" stroke-dasharray="2 1" stroke-width="2"/>

                        <!-- B plate -->
                        <path d="M457 405l175 80v118l-175-80z" fill="#b9605f"/>
                        <path d="M632 485l235-71v118l-235 71z" fill="#da7775"/>
                        <ellipse cx="544.500" cy="504.500" rx="6" ry="9.500" fill="#f7b0aa" transform="rotate(-12 544 504)"/>

                        <!-- A plate -->
                        <path d="M457 345l175 80v60l-175-80z" fill="#5f89b4"/>
                        <path d="M632 425l235-71v60l-235 71z" fill="#7aa9d8"/>
                        <path d="M457 405l175 80 235-71" fill="none" stroke-width="2"/>
                        <ellipse cx="544.500" cy="416.500" rx="6" ry="9.500" fill="#c8e6fa" transform="rotate(-12 544 416)"/>

                        <!-- pocket -->
                        <path d="M689 468l121-36v53l-121 37z" fill="#f5a5a3"/>
                        <path d="M805 434l5-2v53l-5-1z" fill="#b9605f"/>
                        <path d="M698 465l92-28v36l-92 28z" fill="#7f1f4a"/>
                        <path d="M698 501l82-25" stroke="#9ab89a" stroke-width="2"/>
                        <path d="M689 468l9-3v45l-6 2v4l-3 1z" fill="#4a22b0"/>
                        <path d="M790 437l15-4v51l-9-1-16-6 10-4z" fill="#4a22b0"/>
                        <use href="#screw" x="716" y="502"/>
                        <use href="#screw" x="762" y="487"/>
                        <use href="#nipple" x="738" y="558"/>
                        <use href="#nipple" x="776" y="546"/>
                        <use href="#nipple" x="738" y="416"/>
                        <use href="#nipple" x="776" y="403"/>

                        <!-- clamping plate -->
                        <path class="white" d="M438 311l234-72 214 99-234 72z"/>
                        <path d="M438 311l214 99v27l-214-98z" fill="#aaa8a6"/>
                        <path class="lite" d="M652 410l234-72v28l-234 71z"/>
                        <use href="#hole" x="532" y="310"/>
                        <use href="#hole" x="651" y="274"/>
                        <use href="#hole" x="792" y="339"/>
                        <use href="#hole" x="674" y="375"/>

                        <!-- locating ring -->
                        <path d="M602 314v9c2 14 28 24 60 24s58-10 60-24v-9z" fill="#067a5a"/>
                        <ellipse cx="662" cy="314" rx="60" ry="23" fill="#12a37c"/>
                        <ellipse cx="662" cy="314" rx="43" ry="16.500" fill="#08805f"/>
                        <g clip-path="url(#bore)"><ellipse class="white" cx="662" cy="328" rx="42" ry="15"/></g>
                        <ellipse cx="630" cy="299" rx="6" ry="2.500" fill="#4a5a30"/>
                        <ellipse cx="695" cy="328" rx="6" ry="2.500" fill="#4a5a30"/>
                    </g>

                    <!-- work coordinate system -->
                    <path d="M662 357l3 18-2 30h-2l-2-30z" fill="#5f7fd0"/>
                    <path d="M667 408l22-10 15-2-11 6z" fill="#7cc080"/>
                    <path d="M665 411l20 5 13 8-13-2z" fill="#dd7a78"/>
                    <g class="axis">
                        <text x="666" y="356" fill="#2a4fe0">ZC</text>
                        <text x="690" y="392" fill="#3f9a4a">YC</text>
                        <text x="682" y="439" fill="#e03838">XC</text>
                    </g>
                </svg>
            </div>
        </section>
    </main>

    <script src="tree.js"></script>
</body>
</html>
```

FILE: styles.css
```css
* {
    box-sizing: border-box;
}

body {
    margin: 0;
    height: 100vh;
    display: flex;
    flex-direction: column;
    overflow: hidden;
    background: #fff;
    color: #222;
    font-family: "Noto Sans", "Noto Sans CJK SC", sans-serif;
    font-size: 11px;
}

button {
    margin: 0;
    padding: 0;
    border: 0;
    background: none;
    color: inherit;
    font: inherit;
    white-space: nowrap;
    cursor: pointer;
}

svg {
    display: block;
    width: 16px;
    height: 16px;
    flex: none;
    overflow: visible;
}

symbol circle {
    fill: #d82a20;
}

symbol circle[fill="none"],
symbol .ring {
    fill: none;
}

symbol circle[fill="#fff"] {
    fill: #fff;
}

symbol .ring {
    stroke: #222;
    stroke-width: 1.5px;
}

symbol .thin {
    stroke: #666;
    stroke-width: 1px;
}

/* icons whose discs are not snap points */
#b-hole circle { fill: #f3a53e; }
#s-unite circle { fill: #3fb088; }
#c-toggle circle[fill="#ffd400"] { fill: #ffd400; }
#r-part circle[fill="#803070"] { fill: #803070; }
#r-info circle { fill: #2585c8; }
#r-info circle[fill="#fff"] { fill: #fff; }
#r-web circle { fill: #3878c0; }
#r-web circle[fill="#d8f0ea"] { fill: #d8f0ea; }
#r-clock circle { fill: #e8f0fa; }
#r-robot circle { fill: #bbb; }
#r-robot circle[fill="#ee9430"] { fill: #ee9430; }

.sprite {
    position: absolute;
    width: 0;
    height: 0;
}

.sep {
    width: 1px;
    height: 22px;
    background: #d2d6d2;
    flex: none;
}

.caret {
    display: inline-block;
    flex: none;
    width: 6px;
    height: 3px;
    background: #111;
    clip-path: polygon(0 0, 100% 0, 50% 100%);
}

.caret.up {
    clip-path: polygon(0 100%, 100% 100%, 50% 0);
}

.caret.bar {
    height: 7px;
    clip-path: polygon(0 0, 100% 0, 100% 15%, 0 15%, 0 50%, 100% 50%, 50% 100%, 0 50%);
}

.caret.faded {
    background: #999;
}

/* quick access bar */
.quickbar {
    flex: none;
    height: 25px;
    padding: 0 0 7px 1px;
    display: flex;
    align-items: center;
    gap: 6px;
}

.logo {
    align-self: flex-start;
    width: 32px;
    font: bold 21px/24px "Liberation Sans", sans-serif;
    color: #7d96a8;
}

.quickbar .sep {
    margin-left: 1px;
    height: 18px;
}

.qb.text {
    display: flex;
    align-items: center;
    gap: 3px;
}

.quickbar .qb.text + .caret {
    margin-left: -1px;
}

/* ribbon tabs */
.tabs {
    flex: none;
    height: 28px;
    display: flex;
    background: #d7d7d7;
    border-top: 1px solid #c4cccc;
    font-size: 13px;
}

.tabs button {
    padding: 0 13px;
}

.tabs .file {
    width: 78px;
    margin-right: 2px;
    padding: 0 6px 0 0;
    background: #3f99b8;
    color: #fff;
}

.tabs .active {
    background: #fff;
    color: #1b5f88;
}

/* ribbon */
.ribbon {
    flex: none;
    height: 94px;
    padding: 4px 0 3px;
    display: flex;
    border-bottom: 1px solid #c6d0c6;
}

.group {
    flex: none;
    display: flex;
    flex-direction: column;
    justify-content: space-between;
    border-right: 1px solid #d2dad2;
}

.group:last-child {
    border-right: 0;
}

.group-body {
    display: flex;
    padding-left: 10px;
}

.group-foot {
    display: flex;
    align-items: center;
    padding-right: 8px;
    height: 14px;
    line-height: 14px;
    color: #1b5f88;
    white-space: nowrap;
}

.group-foot span {
    flex: 1;
    text-align: center;
}

.narrow .group-foot {
    padding-left: 1px;
}

.narrow .group-foot span {
    text-align: left;
}

.g-sketch { width: 175px; }
.g-feature { width: 369px; }
.g-sync { width: 172px; }
.g-std { width: 104px; }
.g-gear { width: 52px; }
.g-spring { width: 58px; }
.g-cam { width: 48px; }

.big {
    width: 32px;
    display: flex;
    flex-direction: column;
    align-items: center;
    align-self: flex-start;
    line-height: 20px;
}

.big > svg {
    width: 30px;
    height: 30px;
    margin: 2px 0 3px;
}

.big .caret {
    margin-top: 3px;
}

.w36 { width: 36px; }
.w44 { width: 44px; }
.w48 { width: 48px; }

.more {
    width: 37px;
    margin-left: 10px;
}

.more span {
    width: 100%;
    height: 34px;
    margin-top: 1px;
    display: grid;
    place-items: center;
    border: 1px solid #cdd5cd;
    border-radius: 3px;
}

.gallery {
    width: 99px;
    height: 66px;
    margin: 1px 0 0 12px;
    display: grid;
    grid-template-columns: 1fr 1fr 1fr;
    border: 1px solid #c8d0c8;
}

.gallery button {
    display: grid;
    place-items: center;
}

.gallery svg {
    width: 22px;
    height: 22px;
}

.gallery-nav {
    padding: 10px 0 8px;
    margin-left: 5px;
    display: flex;
    flex-direction: column;
    justify-content: space-between;
}

.col {
    margin: 0 7px 0 9px;
    display: flex;
    flex-direction: column;
    gap: 6px;
}

.g-sync .col,
.w36 + .col:nth-last-child(2) {
    margin-right: 2px;
}

.col button {
    display: flex;
    align-items: center;
    gap: 3px;
    height: 16px;
    line-height: 16px;
}

.col .caret {
    margin-left: 6px;
}

.minis {
    padding: 6px 0 0 4px;
    display: flex;
    flex-direction: column;
    gap: 5px;
}

.mini-row {
    display: flex;
    align-items: center;
}

.mini-row button {
    width: 23px;
    height: 24px;
    display: grid;
    place-items: center;
}

.mini-row .sep {
    height: 20px;
    margin: 0 2px;
}

/* selection bar */
.selbar {
    flex: none;
    height: 32px;
    padding-left: 7px;
    display: flex;
    align-items: center;
    border-bottom: 1px solid #7d8a96;
}

.menu {
    display: flex;
    align-items: center;
}

.menu svg {
    margin-right: 4px;
}

.menu .caret {
    margin: 0 6px 0 5px;
}

.combo {
    position: relative;
    flex: none;
    height: 20px;
    margin-left: 10px;
}

.combo.filter {
    width: 132px;
    margin-left: 12px;
}

.combo.scope {
    width: 140px;
}

.combo select {
    appearance: none;
    width: 100%;
    height: 100%;
    padding: 0 2px;
    border: 1px solid #8fa08f;
    border-radius: 0;
    background: #fff;
    color: inherit;
    font: inherit;
}

.combo::after {
    content: "";
    position: absolute;
    right: 6px;
    top: 8px;
    width: 8px;
    height: 4px;
    background: #111;
    clip-path: polygon(0 0, 100% 0, 50% 100%);
    pointer-events: none;
}

.tools {
    display: flex;
    align-items: center;
    gap: 1px;
    margin-left: 4px;
}

.tools button {
    width: 24px;
    height: 22px;
    display: grid;
    place-items: center;
}

.tools .slim {
    width: 18px;
}

.tools .on {
    background: #cfe8f0;
}

.tools .caret {
    margin: 0 3px;
}

/* main area */
main {
    flex: 1;
    min-height: 0;
    display: flex;
}

.rail {
    flex: none;
    width: 29px;
    background: #d9d9d9;
    border-right: 1px solid #93a29c;
}

.rail button {
    display: grid;
    place-items: center;
    width: 100%;
    height: 30px;
}

.rail svg {
    width: 24px;
    height: 24px;
}

.rail .rail-gear {
    height: 41px;
    padding: 0 5px 14px 0;
    border-bottom: 1px solid #93a29c;
}

.rail .rail-gear svg {
    width: 16px;
    height: 16px;
}

.rail .rail-active {
    width: 29px;
    height: 44px;
    background: #fff;
    border-bottom: 1px solid #93a29c;
}

.rail-list {
    padding-top: 5px;
}

.rail-list button + button {
    margin-top: 12px;
}

.rail-list button + .wide {
    margin-top: 24px;
}

.navigator {
    flex: none;
    width: 331px;
    padding: 0 9px 0 6px;
    display: flex;
    flex-direction: column;
}

.nav-title {
    height: 28px;
    padding: 0 6px 0 4px;
    display: flex;
    align-items: center;
    justify-content: space-between;
    font-size: 12px;
}

.max {
    width: 12px;
    height: 11px;
    margin-top: 2px;
    border: 1px solid #111;
    border-top-width: 2px;
}

.nav-box {
    position: relative;
    flex: 1;
    min-height: 0;
    padding: 2px 1px 0;
    overflow: hidden;
    border: 1px solid #c6d0c6;
    border-bottom: 0;
}

.nav-box table {
    width: 100%;
    table-layout: fixed;
    border-collapse: separate;
    border-spacing: 0;
    font-size: 12px;
}

th {
    height: 20px;
    padding: 0 0 0 6px;
    background: #efefef;
    border-right: 1px solid #cfcfcf;
    border-bottom: 1px solid #cfcfcf;
    font-weight: normal;
    text-align: left;
    line-height: 18px;
    overflow: hidden;
    white-space: nowrap;
}

.c-name { width: 230px; }
.c-info { width: 36px; }
.c-ro { width: 24px; }

.sort {
    display: inline-block;
    width: 10px;
    height: 5px;
    margin: 0 0 2px 14px;
    background: #222;
    clip-path: polygon(0 100%, 100% 100%, 50% 0);
}

td {
    height: 20px;
    padding: 0;
    border-right: 1px dotted #d4d4d4;
    border-bottom: 1px dotted #d0d0d0;
    line-height: 18px;
    overflow: hidden;
}

td:first-child {
    border-right: 1px solid #111;
}

tr:nth-child(odd) td {
    background: #fafafa;
}

.node {
    display: flex;
    align-items: center;
    height: 19px;
    white-space: nowrap;
}

.node label {
    display: flex;
    align-items: center;
}

.node svg {
    margin: 0 3px 0 2px;
}

/* dotted branch line */
.branch {
    align-self: stretch;
    width: 9px;
    margin: 0 3px 0 28px;
    border-left: 1px dotted #888;
    background: linear-gradient(90deg, #999 50%, transparent 50%) 0 9px / 2px 1px repeat-x;
}

.node.root {
    padding-left: 5px;
    font-weight: bold;
}

.toggle {
    width: 9px;
    height: 9px;
    margin-right: 7px;
    border: 1px solid #b5b5b5;
    background: linear-gradient(#222, #222) center / 5px 1px no-repeat #fff;
}

.node input {
    appearance: none;
    flex: none;
    width: 12px;
    height: 12px;
    margin: 0;
    border: 1px solid #111;
    background: #fff;
}

.node input:checked {
    background: #fff url("data:image/svg+xml,%3Csvg xmlns='http://www.w3.org/2000/svg' viewBox='0 0 10 10'%3E%3Cpath d='M1 4.500l3 3.500 5-7' fill='none' stroke='%23e01818' stroke-width='2.200'/%3E%3C/svg%3E") center / 10px 10px no-repeat;
}

.state {
    display: block;
    width: 12px;
    height: 12px;
    margin: 0 auto;
    border: 1px dashed #111;
}

td .save {
    width: 14px;
    height: 14px;
    margin: 0 auto;
}

.scroll {
    position: absolute;
    top: 22px;
    right: 1px;
    bottom: 0;
    width: 16px;
    background: #f1f1f1;
}

.scroll button {
    display: grid;
    place-items: center;
    width: 100%;
    height: 20px;
}

.scroll svg {
    width: 9px;
    height: 9px;
}

.thumb {
    height: 130px;
    background: #cbcbcb;
}

/* graphics window */
.view {
    flex: 1;
    min-width: 0;
    display: flex;
    flex-direction: column;
    border-left: 1px solid #3f99b8;
}

.doc-tabs {
    flex: none;
    display: flex;
    height: 23px;
    border-bottom: 2px solid #3f99b8;
}

.doc-tab {
    display: flex;
    align-items: center;
    padding: 0 6px;
    background: #3f99b8;
    color: #fff;
    font-size: 12px;
}

.doc-tab > svg {
    margin-right: 4px;
}

.doc-tab button {
    margin-left: 6px;
}

.doc-tab button svg {
    width: 9px;
    height: 9px;
}

.canvas {
    flex: 1;
    min-height: 0;
    border-top: 1px solid #e8a050;
    border-left: 1px solid #f2a33c;
    background: linear-gradient(#b0b0b0 0%, #b9bab9 20%, #cdd2cf 48%, #d2d7d5 65%, #e4e6e8 90%, #e6e6e6 100%);
}

.model {
    width: 100%;
    height: 100%;
    overflow: hidden;
}

.edge {
    stroke: #2c2c2c;
    stroke-width: 1px;
    stroke-linejoin: round;
}

.white { fill: #fff; }
.lite { fill: #cfd2ce; }
.dark { fill: #b0b3b0; }

.axis {
    font: 13px "Liberation Sans", sans-serif;
}
```

FILE: tree.js
```javascript
var parts = [
    "AD_id6", "M5.00-20.00_id10", "lianjietao_id14", "M5.00-20.00_id18",
    "lianjietao_id22", "M5.00-20.00_id26", "lianjietao_id30", "M5.00-20.00_id34",
    "lianjietao_id38", "M8.00-30.00_id42", "lianjietao_id46", "M8.00-30.00_id50",
    "M8.00-30.00_id54", "lianjietao_id58", "lianjietao_id62", "lianjietao_id66",
    "lianjietao_id70", "lianjietao_id74", "DDZ3.00_id78", "DDZ3.00_id82",
    "DDZ3.00_id86", "DDZ4.00_id90", "DDZ3.00_id94", "DDZ3.00_id98",
    "DDZ3.00_id102", "lianjietao_id106", "M5.00-20.00_id110", "M5.00-20.00_id114"
];

// root row first, then one row for each component
var rows = `<tr>
    <td><div class="node root"><button class="toggle" aria-label="折叠"></button>
        <label><input type="checkbox" checked><svg><use href="#y-asm"/></svg>lianjietao_x_t（顺序：时间...</label></div></td>
    <td></td><td><svg class="save"><use href="#i-save"/></svg></td><td></td>
</tr>`;

parts.forEach(function(name) {
    rows += `<tr>
        <td><div class="node"><span class="branch"></span>
            <label><input type="checkbox" checked><svg><use href="#y-cube"/></svg>${name}_x_t</label></div></td>
        <td></td><td><span class="state"></span></td><td></td>
    </tr>`;
});

document.getElementById("tree").innerHTML = rows;
```
